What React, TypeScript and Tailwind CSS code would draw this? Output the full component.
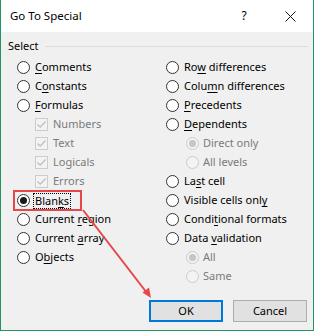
import React from "react";

type Item = { kind: "radio" | "check" | "sub"; label: string; checked?: boolean; focus?: boolean };

const leftItems: Item[] = [
  { kind: "radio", label: "&Comments" },
  { kind: "radio", label: "C&onstants" },
  { kind: "radio", label: "&Formulas" },
  { kind: "check", label: "Numbers", checked: true },
  { kind: "check", label: "Text", checked: true },
  { kind: "check", label: "Logicals", checked: true },
  { kind: "check", label: "Errors", checked: true },
  { kind: "radio", label: "Blan&ks", checked: true, focus: true },
  { kind: "radio", label: "Current &region" },
  { kind: "radio", label: "Current &array" },
  { kind: "radio", label: "O&bjects" },
];

const rightItems: Item[] = [
  { kind: "radio", label: "Ro&w differences" },
  { kind: "radio", label: "Colu&mn differences" },
  { kind: "radio", label: "&Precedents" },
  { kind: "radio", label: "&Dependents" },
  { kind: "sub", label: "Direct only", checked: true },
  { kind: "sub", label: "All levels" },
  { kind: "radio", label: "La&st cell" },
  { kind: "radio", label: "Visible cells onl&y" },
  { kind: "radio", label: "Condi&tional formats" },
  { kind: "radio", label: "Data &validation" },
  { kind: "sub", label: "All", checked: true },
  { kind: "sub", label: "Same" },
];

// "&" marks the access key, drawn underlined
const Label = ({ text }: { text: string }) => {
  const i = text.indexOf("&");
  if (i < 0) return <>{text}</>;
  return (
    <>
      {text.slice(0, i)}
      <span className="underline underline-offset-[2px]">{text[i + 1]}</span>
      {text.slice(i + 2)}
    </>
  );
};

const Row = ({ item }: { item: Item }) => {
  if (item.kind === "check") {
    return (
      <div className="flex h-[19px] items-center gap-[5px] pl-[18px] text-[#7a7a7a]">
        <span className="flex h-[13px] w-[13px] items-center justify-center border border-[#cccccc] bg-[#f3f3f3]">
          <svg width="11" height="11" viewBox="0 0 11 11">
            <path d="M1.5 5.5 L4.2 8.2 L9.5 2.5" fill="none" stroke="#bcbcbc" strokeWidth="1.2" />
          </svg>
        </span>
        <span>{item.label}</span>
      </div>
    );
  }
  if (item.kind === "sub") {
    return (
      <div className="flex h-[19px] items-center gap-[4px] pl-[20px] text-[#7a7a7a]">
        <span className="flex h-[13px] w-[13px] items-center justify-center rounded-full border border-[#cccccc] bg-[#f3f3f3]">
          {item.checked && <span className="h-[7px] w-[7px] rounded-full bg-[#c5c5c5]" />}
        </span>
        <span>{item.label}</span>
      </div>
    );
  }
  return (
    <div className="relative flex h-[19px] items-center gap-[5px] text-black">
      <span className="flex h-[13px] w-[13px] items-center justify-center rounded-full border border-[#333333] bg-white">
        {item.checked && <span className="h-[7px] w-[7px] rounded-full bg-[#1a1a1a]" />}
      </span>
      {item.focus ? (
        <span className="ml-[-2px] border border-dotted border-black px-[1px] leading-[14px]">
          <Label text={item.label} />
        </span>
      ) : (
        <span>
          <Label text={item.label} />
        </span>
      )}
      {item.focus && (
        <span className="absolute left-[-4px] top-[-1px] h-[21px] w-[69px] border-2 border-[#e5474b]" />
      )}
    </div>
  );
};

export default function App() {
  return (
    <div className="h-[332px] w-[316px] bg-white">
      <div className="relative flex h-[331px] w-[314px] flex-col border-x border-b border-[#22955e] font-['Noto_Sans',sans-serif] text-[11px] text-black">
        <div className="flex h-[32px] items-center bg-white pl-[9px]">
          <span className="text-[11.5px]">Go To Special</span>
          <div className="ml-auto flex h-full">
            <span className="flex w-[46px] items-center justify-center text-[12px]">?</span>
            <span className="flex w-[46px] items-center justify-center">
              <svg width="11" height="11" viewBox="0 0 11 11">
                <path d="M0.5 0.5 L10.5 10.5 M10.5 0.5 L0.5 10.5" stroke="#111" strokeWidth="1" />
              </svg>
            </span>
          </div>
        </div>

        <div className="flex flex-1 flex-col bg-[#f0f0f0]">
          <div className="mt-[6px] flex h-[16px] items-center gap-[6px] pl-[7px] pr-[5px]">
            <span>Select</span>
            <span className="h-px flex-1 bg-[#dcdcdc]" />
          </div>

          <div className="mt-[4px] flex pl-[16px]">
            <div className="flex w-[149px] flex-col">
              {leftItems.map((it) => (
                <Row key={it.label} item={it} />
              ))}
            </div>
            <div className="flex flex-col">
              {rightItems.map((it) => (
                <Row key={it.label} item={it} />
              ))}
            </div>
          </div>

          <div className="mt-[14px] flex justify-end gap-[10px] pr-[6px]">
            <button className="flex h-[22px] w-[74px] items-center justify-center border-2 border-[#0078d7] bg-[#e1e1e1]">
              OK
            </button>
            <button className="flex h-[22px] w-[74px] items-center justify-center border border-[#adadad] bg-[#e1e1e1]">
              Cancel
            </button>
          </div>
        </div>

        <svg className="pointer-events-none absolute left-0 top-0" width="314" height="331">
          <line x1="82" y1="210" x2="146" y2="293" stroke="#e5474b" strokeWidth="2" />
          <path d="M150 298 L141.5 292.5 L148 287.5 Z" fill="#e5474b" />
        </svg>
      </div>
    </div>
  );
}
